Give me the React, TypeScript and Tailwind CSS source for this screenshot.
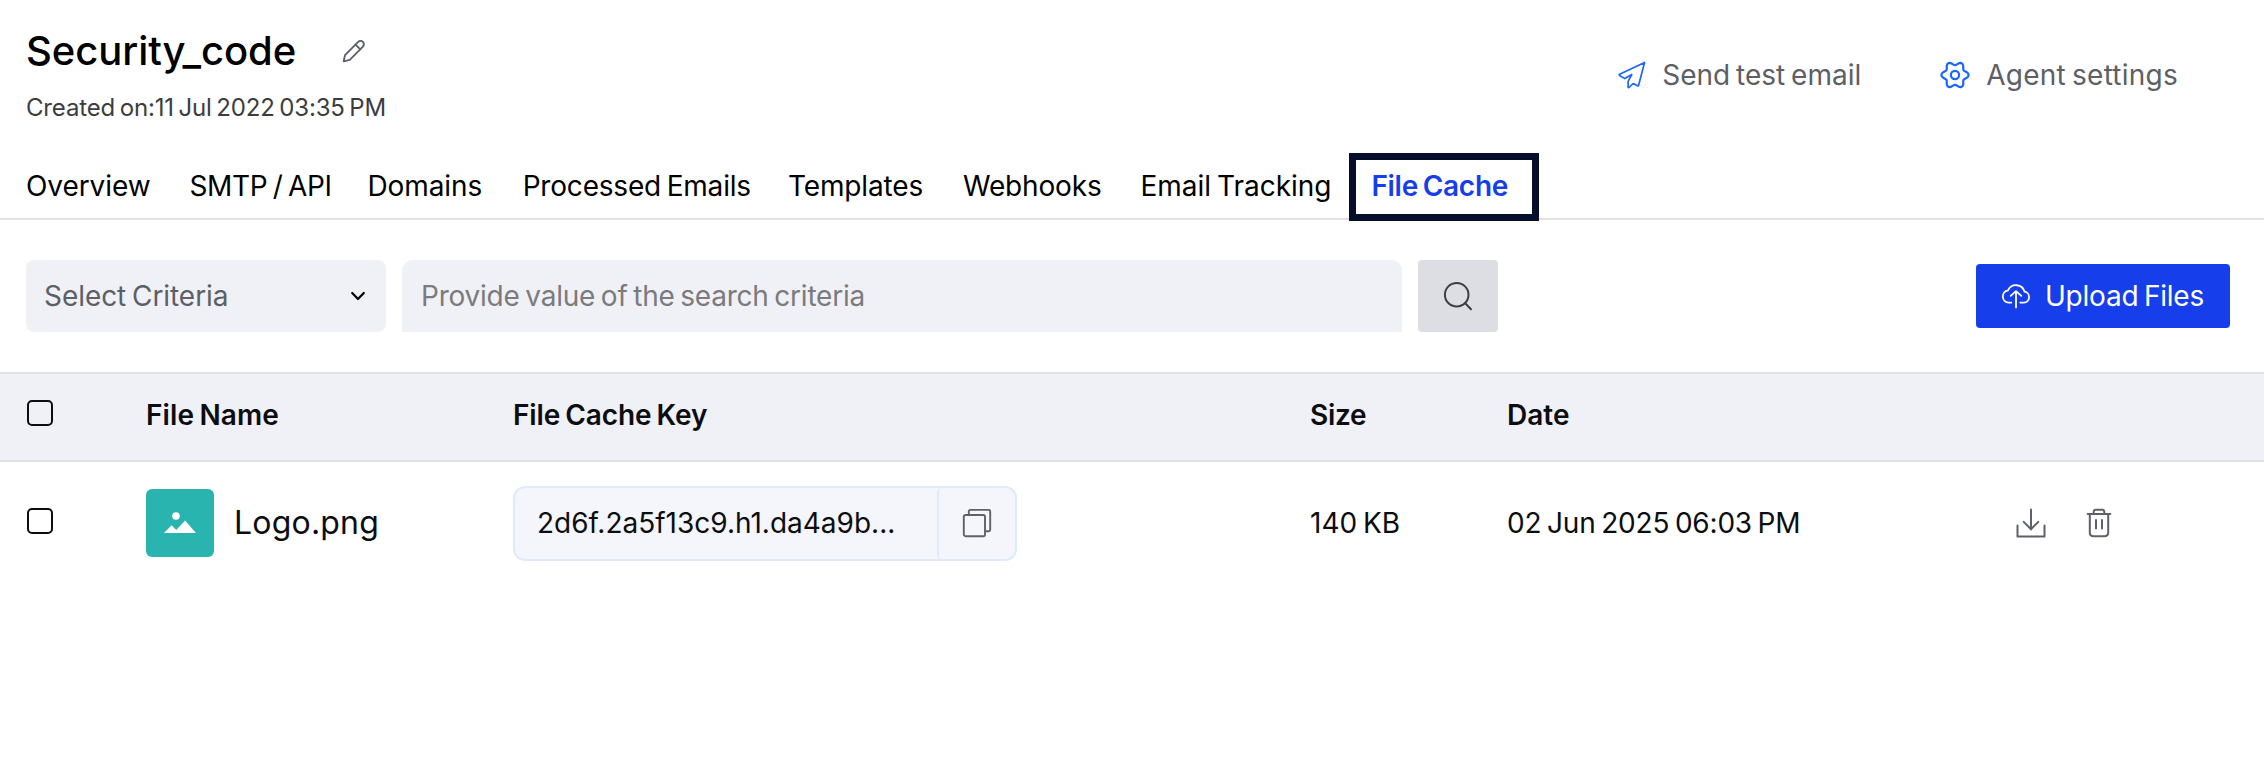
import React, { useState } from 'react';

interface Tab {
  name: string;
  className: string;
}

interface CachedFile {
  name: string;
  cacheKey: string;
  size: string;
  date: string;
}

const TABS: Tab[] = [
  { name: 'Overview', className: 'w-[163.5px] tracking-[-0.08px]' },
  { name: 'SMTP / API', className: 'w-[178px] tracking-[-0.35px]' },
  { name: 'Domains', className: 'w-[155.2px] tracking-[-0.1px]' },
  { name: 'Processed Emails', className: 'w-[265.3px] tracking-[-0.2px]' },
  { name: 'Templates', className: 'w-[174.9px] tracking-[-0.15px]' },
  { name: 'Webhooks', className: 'w-[177.5px] tracking-[-0.15px]' },
  { name: 'Email Tracking', className: 'w-[209px]' },
];

const FILES: CachedFile[] = [
  { name: 'Logo.png', cacheKey: '2d6f.2a5f13c9.h1.da4a9b...', size: '140 KB', date: '02 Jun 2025 06:03 PM' },
];

const GRID = 'grid grid-cols-[120px_367px_797px_197px_509px_1fr] items-center pl-[26px]';

// Six-lobed outline for the settings icon
const gearPath = () => {
  const points: string[] = [];
  for (let deg = 0; deg < 360; deg += 5) {
    const a = (deg * Math.PI) / 180;
    const r = 11.7 + 1.9 * Math.cos(6 * a);
    points.push(`${(16 + r * Math.cos(a)).toFixed(2)} ${(16 + r * Math.sin(a)).toFixed(2)}`);
  }
  return `M${points.join('L')}Z`;
};

const PencilIcon = () => (
  <svg className="w-6 h-6" viewBox="0 0 24 24" fill="none" stroke="#5f6169" strokeWidth="1.9" strokeLinejoin="round" strokeLinecap="round">
    <path d="M1.7 22.3 3 16.1 16.2 2.9a3.3 3.3 0 0 1 4.7 4.7L7.8 20.8Z" />
    <path d="m13.6 5.6 4.7 4.7" />
  </svg>
);

const SendIcon = () => (
  <svg className="w-7 h-7" viewBox="0 0 28 28" fill="none" stroke="#1b66ff" strokeWidth="1.7" strokeLinejoin="round" strokeLinecap="round">
    <path d="M26.6 1.4 1.6 13.2c-.6.3-.5.9 0 1.2l5.2 3.2 7-4-2.9 5.2c-.5.9-.8 1.6-.8 2.4v4.9c0 .6.5.8.9.4l4.2-4 4.2 2.3c.5.3 1 .1 1.2-.5Z" />
  </svg>
);

const GearIcon = () => (
  <svg className="w-8 h-8" viewBox="0 0 32 32" fill="none" stroke="#1b66ff" strokeWidth="2.2" strokeLinejoin="round">
    <path d={gearPath()} />
    <circle cx="16" cy="16" r="4.1" />
  </svg>
);

const SearchIcon = () => (
  <svg className="w-[30px] h-[30px]" viewBox="0 0 30 30" fill="none" stroke="#3d3e42" strokeWidth="2" strokeLinecap="round">
    <circle cx="13.7" cy="13.7" r="11.8" />
    <path d="m22 22 6 6.3" />
  </svg>
);

const CloudUploadIcon = () => (
  <svg className="w-[30px] h-[26px]" viewBox="0 0 30 26" fill="none" stroke="#fff" strokeWidth="1.8" strokeLinecap="round" strokeLinejoin="round">
    <path d="M10.3 19.6H7.6A6.2 6.2 0 0 1 7 7.3 8.9 8.9 0 0 1 23.6 8.7a5.5 5.5 0 0 1-.7 10.9h-3.6" />
    <path d="M15 24.4V9.2M9.7 12.9 15 8.2l5.3 4.7" />
  </svg>
);

const ImageIcon = () => (
  <svg className="w-8 h-[22px]" viewBox="0 0 32 22" fill="#fff">
    <circle cx="12" cy="4" r="3.8" />
    <path d="m0 21 7.6-7.8 4.6 4.7 8.9-9.4L32 21Z" />
  </svg>
);

const CopyIcon = () => (
  <svg className="w-[30px] h-[30px]" viewBox="0 0 30 30" fill="none" stroke="#5f6169" strokeWidth="1.9" strokeLinejoin="round">
    <rect x="1.8" y="7" width="21.2" height="21.2" rx="1.8" />
    <path d="M6.8 6.8V3.4c0-.9.6-1.5 1.5-1.5h18.4c.9 0 1.5.6 1.5 1.5v18.3c0 .9-.6 1.5-1.5 1.5h-3.4" />
  </svg>
);

const DownloadIcon = () => (
  <svg className="w-[30px] h-[30px]" viewBox="0 0 30 30" fill="none" stroke="#5f6169" strokeWidth="2" strokeLinecap="round" strokeLinejoin="round">
    <path d="M1.5 17.6v10.8h27V17.6" />
    <path d="M15 1.5v20M7.7 13.9l7.3 7.3 7.3-7.3" />
  </svg>
);

const TrashIcon = () => (
  <svg className="w-[26px] h-[30px]" viewBox="0 0 26 30" fill="none" stroke="#5f6169" strokeWidth="2" strokeLinecap="round" strokeLinejoin="round">
    <path d="M1.7 6h22.6M7.7 5.8V4c0-1.4.9-2.3 2.3-2.3h6c1.4 0 2.3.9 2.3 2.3v1.8" />
    <path d="M3.8 6.2v18.3c0 2.3 1.5 3.8 3.8 3.8h10.8c2.3 0 3.8-1.5 3.8-3.8V6.2" />
    <path d="M10 12v8.4M16 12v8.4" />
  </svg>
);

interface CheckboxProps {
  checked: boolean;
  onChange: () => void;
}

const Checkbox: React.FC<CheckboxProps> = ({ checked, onChange }) => (
  <button
    role="checkbox"
    aria-checked={checked}
    onClick={onChange}
    className={`block ml-px mb-[5px] w-[26px] h-[26px] rounded-[5px] border-2 border-[#0c0d10] ${checked ? 'bg-[#173eeb]' : ''}`}
  />
);

export default function App() {
  const [selected, setSelected] = useState<string[]>([]);
  const [query, setQuery] = useState('');

  const allSelected = selected.length === FILES.length;

  const toggle = (name: string) => {
    setSelected(selected.includes(name) ? selected.filter(n => n !== name) : [...selected, name]);
  };

  return (
    <div className="h-[758px] overflow-hidden bg-white font-[Inter,sans-serif] text-[28px] leading-9 [word-spacing:-2px] [&_button]:[word-spacing:inherit] [&_input]:[word-spacing:inherit] whitespace-nowrap text-black">
      {/* Title and page actions */}
      <header className="flex justify-between h-[153px] pl-[26px] pr-[86px]">
        <div className="pt-[21px]">
          <div className="flex items-center h-[60px]">
            <h1 className="w-[316px] text-[40px] font-medium tracking-[-0.05px]">Security_code</h1>
            <PencilIcon />
          </div>
          <p className="mt-[9px] text-[24px] tracking-[-0.16px] text-[#3c3c3e]">Created on:11 Jul 2022 03:35 PM</p>
        </div>
        <div className="flex items-center h-[150px] text-[#5c5f66]">
          <button className="flex items-center w-[321px]">
            <SendIcon />
            <span className="ml-4">Send test email</span>
          </button>
          <button className="flex items-center">
            <GearIcon />
            <span className="ml-[15px] tracking-[0.24px]">Agent settings</span>
          </button>
        </div>
      </header>

      {/* Tabs */}
      <nav className="flex h-[67px] pl-[26px] border-b-2 border-[#e1e1e3]">
        {TABS.map(tab => (
          <button key={tab.name} className={`shrink-0 text-left ${tab.className}`}>{tab.name}</button>
        ))}
        <button className="shrink-0 w-[190px] h-[68px] pl-[15px] pb-[2px] border-[7px] border-[#050f2b] text-left font-semibold tracking-[-0.28px] text-[#173eeb]">
          File Cache
        </button>
      </nav>

      {/* Search toolbar */}
      <div className="flex items-center h-[152px] pl-[26px] pr-[34px]">
        <button className="flex items-center justify-between w-[360px] h-[72px] pl-[18px] pr-5 rounded-lg bg-[#f0f1f7] tracking-[-0.06px] text-[#5c5f66]">
          Select Criteria
          <svg className="w-4 h-3" viewBox="0 0 16 12" fill="none" stroke="#000" strokeWidth="2.2" strokeLinecap="round" strokeLinejoin="round">
            <path d="m2.2 3 5.8 6 5.8-6" />
          </svg>
        </button>
        <input
          value={query}
          onChange={e => setQuery(e.target.value)}
          placeholder="Provide value of the search criteria"
          className="w-[1000px] h-[72px] ml-4 pl-[19px] rounded-t-[11px] bg-[#f0f1f7] tracking-[-0.22px] outline-none placeholder:text-[#7b7b7d]"
        />
        <button className="flex items-center justify-center w-20 h-[72px] ml-4 rounded bg-[#dddee3]">
          <SearchIcon />
        </button>
        <button className="flex items-center w-[254px] h-16 ml-auto pl-[25px] rounded bg-[#173eeb] text-white">
          <CloudUploadIcon />
          <span className="ml-[14px] tracking-[-0.23px]">Upload Files</span>
        </button>
      </div>

      {/* File list */}
      <div className={`${GRID} h-[90px] pb-1 border-y-2 border-[#e0e1e5] bg-[#f0f1f7] font-semibold text-[#0c0d10]`}>
        <Checkbox checked={allSelected} onChange={() => setSelected(allSelected ? [] : FILES.map(f => f.name))} />
        <span className="tracking-[0.13px]">File Name</span>
        <span className="tracking-[-0.09px]">File Cache Key</span>
        <span className="tracking-[-0.3px]">Size</span>
        <span>Date</span>
      </div>
      {FILES.map(file => (
        <div key={file.name} className={`${GRID} h-[122px] text-[#0c0d10]`}>
          <Checkbox checked={selected.includes(file.name)} onChange={() => toggle(file.name)} />
          <div className="flex items-center">
            <div className="flex items-center justify-center w-[68px] h-[68px] rounded-md bg-[#2ab4b0]">
              <ImageIcon />
            </div>
            <span className="ml-5 text-[32px] tracking-[0.2px]">{file.name}</span>
          </div>
          <div className="flex w-[504px] h-[75px] rounded-xl border-2 border-[#dfebfb] bg-[#f5f6fb]">
            <span className="flex items-center w-[422px] pl-[22px]">{file.cacheKey}</span>
            <button className="flex flex-1 items-center justify-center rounded-l border-l-2 border-[#dfebfb]">
              <CopyIcon />
            </button>
          </div>
          <span>{file.size}</span>
          <span className="tracking-[-0.2px]">{file.date}</span>
          <div className="flex items-center gap-10">
            <button><DownloadIcon /></button>
            <button><TrashIcon /></button>
          </div>
        </div>
      ))}
    </div>
  );
}
